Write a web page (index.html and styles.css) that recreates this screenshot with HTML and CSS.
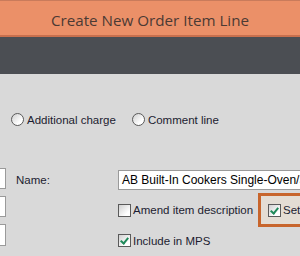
FILE: index.html
```html
<!DOCTYPE html>
<html lang="en">
<head>
    <meta charset="UTF-8">
    <title>Create New Order Item Line</title>
    <link rel="stylesheet" href="styles.css">
</head>
<body>
    <div class="dialog">
        <div class="titlebar">Create New Order Item Line</div>
        <div class="toolbar"></div>

        <div class="content">
            <div class="radios">
                <label class="radio first"><span class="circle"></span>Additional charge</label>
                <label class="radio"><span class="circle"></span>Comment line</label>
            </div>

            <div class="form">
                <div class="leftcol">
                    <div class="stub"></div>
                    <div class="stub"></div>
                    <div class="stub tall"></div>
                </div>

                <div class="main">
                    <div class="row name-row">
                        <span class="label">Name:</span>
                        <div class="textbox">AB Built-In Cookers Single-Oven/30</div>
                    </div>

                    <div class="row opts">
                        <label class="check amend"><span class="box"></span>Amend item description</label>
                        <div class="highlight">
                            <label class="check"><span class="box checked"></span>Set</label>
                        </div>
                    </div>

                    <div class="row mps">
                        <label class="check"><span class="box checked"></span>Include in MPS</label>
                    </div>
                </div>
            </div>
        </div>
    </div>
</body>
</html>
```

FILE: styles.css
```css
body {
    margin: 0;
    width: 300px;
    height: 256px;
    overflow: hidden;
    background-color: #d9d9d9;
    font-family: "Liberation Sans", Arial, sans-serif;
    font-size: 11.5px;
    color: #1c1c30;
}
.titlebar {
    height: 34px;
    border-top: 1px solid #c97b5b;
    border-bottom: 2px solid #c8704e;
    background-color: #eb9068;
    color: #4b3a34;
    font-family: "Open Sans", sans-serif;
    font-size: 15.2px;
    line-height: 38px;
    text-align: center;
    white-space: nowrap;
}
.toolbar {
    height: 37px;
    background-color: #4b4e53;
}
.content {
    padding-top: 39px;
}
.radios {
    display: flex;
    align-items: center;
    height: 13px;
}
.radio {
    display: flex;
    align-items: center;
    gap: 3px;
    margin-left: 11px;
}
.radio + .radio {
    margin-left: 16px;
}
.circle {
    width: 11px;
    height: 11px;
    border: 1px solid #5a5a5a;
    border-radius: 50%;
    background: linear-gradient(135deg, #cfcfcf, #ffffff 70%);
}
.form {
    display: flex;
    margin-top: 41px;
}
.leftcol {
    display: flex;
    flex-direction: column;
    gap: 7px;
    width: 6px;
    padding-top: 1px;
}
.stub {
    height: 19px;
    background-color: #fff;
    border: 1px solid #9a9a9a;
    border-left: none;
    width: 5px;
}
.stub.tall {
    height: 20px;
}
.main {
    margin-left: 10px;
    flex: 1;
}
.row {
    display: flex;
    align-items: center;
}
.name-row {
    padding-top: 3px;
}
.label {
    width: 102px;
}
.textbox {
    width: 200px;
    height: 18px;
    border: 1px solid #9a9a9a;
    background-color: #fff;
    color: #000;
    font-size: 12px;
    line-height: 18px;
    padding-left: 3px;
    white-space: nowrap;
    overflow: hidden;
}
.opts {
    margin-top: 3px;
    margin-left: 102px;
}
.amend {
    width: 140px;
}
.check {
    display: flex;
    align-items: center;
    gap: 2px;
    white-space: nowrap;
}
.box {
    position: relative;
    width: 11px;
    height: 11px;
    border: 1px solid #5a5a5a;
    background: linear-gradient(135deg, #d0d0d0, #ffffff 75%);
}
.box.checked::after {
    content: "";
    position: absolute;
    left: 3px;
    top: 1px;
    width: 3px;
    height: 6px;
    border-right: 2px solid #1f8a5a;
    border-bottom: 2px solid #1f8a5a;
    transform: rotate(40deg);
}
.highlight {
    height: 28px;
    border: 3px solid #c8652c;
    border-right: none;
    background-color: #e4ddd4;
    padding-left: 7px;
    display: flex;
    align-items: center;
    width: 40px;
}
.mps {
    margin-top: 7px;
    margin-left: 102px;
}
```
